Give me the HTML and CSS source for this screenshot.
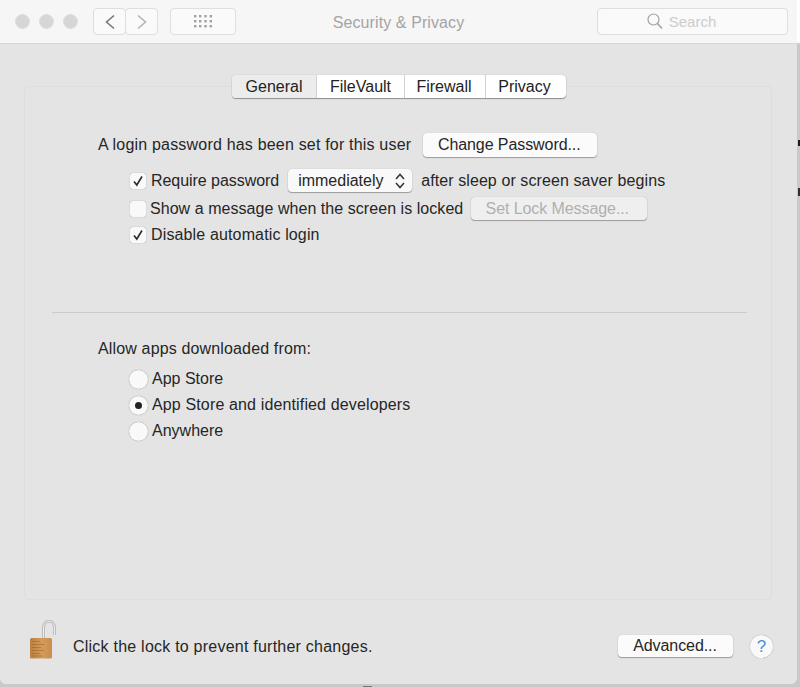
FILE: index.html
```html
<!DOCTYPE html>
<html lang="en">
<head>
<meta charset="utf-8">
<title>Security &amp; Privacy</title>
<link rel="stylesheet" href="styles.css">
</head>
<body>
<div class="window">
  <header class="titlebar">
    <div class="lights"><span class="light"></span><span class="light"></span><span class="light"></span></div>
    <div class="nav">
      <span class="nav-btn"><svg width="12" height="16" viewBox="0 0 12 16"><path d="M10 1.500 L2.500 8 L10 14.500" fill="none" stroke="#777" stroke-width="1.600"/></svg></span>
      <span class="nav-btn"><svg width="12" height="16" viewBox="0 0 12 16"><path d="M2 1.500 L9.500 8 L2 14.500" fill="none" stroke="#b4b4b4" stroke-width="1.600"/></svg></span>
    </div>
    <span class="grid-btn"><svg width="18" height="14" viewBox="0 0 18 14" fill="#a0a0a0"><rect x="0" y="0" width="2.400" height="2.400"/><rect x="5" y="0" width="2.400" height="2.400"/><rect x="10.300" y="0" width="2.400" height="2.400"/><rect x="15.600" y="0" width="2.400" height="2.400"/><rect x="0" y="5" width="2.400" height="2.400"/><rect x="5" y="5" width="2.400" height="2.400"/><rect x="10.300" y="5" width="2.400" height="2.400"/><rect x="15.600" y="5" width="2.400" height="2.400"/><rect x="0" y="10" width="2.400" height="2.400"/><rect x="5" y="10" width="2.400" height="2.400"/><rect x="10.300" y="10" width="2.400" height="2.400"/><rect x="15.600" y="10" width="2.400" height="2.400"/></svg></span>
    <h1 class="title">Security &amp; Privacy</h1>
    <div class="search"><svg width="16" height="17" viewBox="0 0 16 17"><circle cx="6.500" cy="6.500" r="5.500" fill="none" stroke="#a0a0a0" stroke-width="1.200"/><path d="M10.500 10.500 L15 15.500" stroke="#a0a0a0" stroke-width="1.500"/></svg><span>Search</span></div>
  </header>

  <main class="content">
    <nav class="tabs">
      <span class="tab tab-active">General</span><span class="tab tab-vault">FileVault</span><span class="tab tab-wall">Firewall</span><span class="tab tab-priv">Privacy</span>
    </nav>
    <section class="panel">
      <div class="row-login">
        <span class="wide">A login password has been set for this user</span>
        <button class="btn btn-change">Change Password...</button>
      </div>
      <div class="options">
        <div class="opt opt-first">
          <span class="check"><svg width="12" height="12" viewBox="0 0 12 12"><path d="M2 6.500 L4.800 10 L10 1.500" fill="none" stroke="#2a2a2a" stroke-width="1.600"/></svg></span>
          <span class="require">Require password</span>
          <span class="select">immediately<svg width="12" height="18" viewBox="0 0 12 18"><path d="M2 7 L6 2.500 L10 7 M2 11 L6 15.500 L10 11" fill="none" stroke="#333" stroke-width="1.500"/></svg></span>
          <span class="after">after sleep or screen saver begins</span>
        </div>
        <div class="opt opt-second">
          <span class="check"></span>
          <span class="show-text">Show a message when the screen is locked</span>
          <button class="btn btn-lock" disabled>Set Lock Message...</button>
        </div>
        <div class="opt opt-third">
          <span class="check"><svg width="12" height="12" viewBox="0 0 12 12"><path d="M2 6.500 L4.800 10 L10 1.500" fill="none" stroke="#2a2a2a" stroke-width="1.600"/></svg></span>
          <span class="mid">Disable automatic login</span>
        </div>
      </div>
      <hr class="divider">
      <p class="allow">Allow apps downloaded from:</p>
      <div class="radios">
        <div class="radio-row"><span class="radio"></span><span>App Store</span></div>
        <div class="radio-row"><span class="radio radio-on"></span><span class="mid">App Store and identified developers</span></div>
        <div class="radio-row"><span class="radio"></span><span>Anywhere</span></div>
      </div>
    </section>
    <footer class="footer">
      <svg class="lock" width="29" height="40" viewBox="0 0 29 40">
        <defs>
          <linearGradient id="brass" x1="0" y1="0" x2="1" y2="0">
            <stop offset="0" stop-color="#bb803f"/><stop offset=".55" stop-color="#d39c5c"/><stop offset="1" stop-color="#c88d4b"/>
          </linearGradient>
        </defs>
        <path d="M14.500 19 V8 C14.500 -1 25.500 -1 25.500 8 V15" fill="none" stroke="#bcbcbc" stroke-width="3"/>
        <path d="M14.500 19 V8 C14.500 -1 25.500 -1 25.500 8 V15" fill="none" stroke="#ececec" stroke-width="1"/>
        <rect x="1" y="18" width="22" height="20.500" rx="1.500" fill="url(#brass)"/>
        <path d="M3 21.500h8M3 24.500h12M3 27.500h9M3 30.500h12M3 33.500h8M3 36h10" stroke="#8f5b24" stroke-width="1" opacity=".45"/>
      </svg>
      <span class="lock-text">Click the lock to prevent further changes.</span>
      <button class="btn btn-advanced">Advanced...</button>
      <span class="help">?</span>
    </footer>
  </main>
</div>
<span class="edge-mark edge-mark-top"></span>
<span class="edge-mark edge-mark-low"></span>
<span class="dock-mark"></span>
</body>
</html>
```
FILE: styles.css
```css
* { box-sizing: border-box; }
html, body { margin: 0; padding: 0; }
body {
  width: 800px;
  height: 687px;
  overflow: hidden;
  position: relative;
  background: linear-gradient(#fff 0, #fff 42px, #c9c9c9 44px);
  font-family: "Liberation Sans", Arial, sans-serif;
  font-size: 16px;
  color: #262626;
}
.wide { letter-spacing: .19px; }
.mid { letter-spacing: .14px; }
.window {
  width: 797px;
  height: 684px;
  background: #e4e4e4;
  border-radius: 0 0 6px 6px;
  display: flex;
  flex-direction: column;
}
.titlebar {
  height: 44px;
  flex: none;
  background: #f6f6f6;
  border-bottom: 1px solid #d6d6d6;
  display: flex;
  align-items: center;
  position: relative;
  padding-left: 15px;
}
.lights { display: flex; gap: 9px; }
.light {
  width: 15px; height: 15px; border-radius: 50%;
  background: #d6d6d6; border: 1px solid #dedede;
}
.nav { display: flex; margin-left: 15px; }
.nav-btn {
  width: 33px; height: 27px;
  border: 1px solid #dedede; border-radius: 4px; background: #fafafa;
  display: flex; align-items: center; justify-content: center;
}
.nav-btn + .nav-btn { margin-left: -1px; }
.grid-btn {
  width: 66px; height: 27px; margin-left: 12px;
  border: 1px solid #dedede; border-radius: 4px; background: #fafafa;
  display: flex; align-items: center; justify-content: center;
}
.title {
  position: absolute; left: 0; width: 797px; margin: 2px 0 0;
  text-align: center; font-size: 16px; font-weight: 400; color: #a4a4a4;
  letter-spacing: .1px;
}
.search {
  margin-left: auto; margin-right: 9px;
  width: 191px; height: 27px; padding-right: 22px;
  border: 1px solid #dedede; border-radius: 4px; background: #fafafa;
  display: flex; align-items: center; justify-content: center; gap: 6px;
  color: #cccccc; font-size: 15px;
}
.content {
  flex: 1;
  display: flex; flex-direction: column;
  padding: 31px 25px 0 24px;
}
.tabs {
  display: flex; align-self: flex-start;
  margin-left: 208px; margin-bottom: -12px;
  position: relative; z-index: 1;
  background: #fff; border-radius: 4px;
  box-shadow: 0 1px 1px rgba(0,0,0,.35), 0 0 1px rgba(0,0,0,.3);
}
.tab {
  height: 23px; line-height: 23px; text-align: center;
  border-left: 1px solid #d2d2d2; color: #222;
}
.tab:first-child { border-left: 0; }
.tab-active { background: #ececec; border-radius: 4px 0 0 4px; width: 84px; }
.tab-vault { width: 88px; }
.tab-wall { width: 81px; padding-right: 2px; }
.tab-priv { width: 81px; padding-right: 3px; }
.panel {
  height: 514px;
  background: #e4e4e4;
  border: 1px solid #dedede;
  border-radius: 4px;
  padding: 46px 24px 0 27px;
}
.row-login { display: flex; align-items: center; padding-left: 46px; height: 24px; gap: 12px; }
.btn {
  font: inherit; color: #262626; background: #fbfbfb; border: 0; padding: 0;
  border-radius: 4px; box-shadow: 0 1px 1px rgba(0,0,0,.3), 0 0 1px rgba(0,0,0,.25);
  letter-spacing: -.08px;
}
.btn-change { width: 174px; height: 24px; padding-right: 2px; }
.options { padding-left: 78px; margin-top: 12px; }
.opt { display: flex; align-items: center; height: 23px; }
.opt-second { margin-top: 5px; }
.opt-third { margin-top: 3px; }
.check {
  width: 16px; height: 16px; flex: none;
  background: #f9f9f9; border-radius: 3px;
  box-shadow: 0 0 1px rgba(0,0,0,.45);
  display: flex; align-items: center; justify-content: center;
}
.require { margin-left: 5px; letter-spacing: -.05px; }
.select {
  width: 124px; height: 23px; padding: 0 6px 0 10px; margin-left: 9px;
  background: #f9f9f9; border-radius: 4px;
  box-shadow: 0 1px 1px rgba(0,0,0,.3), 0 0 1px rgba(0,0,0,.25);
  display: flex; align-items: center; justify-content: space-between;
}
.after { margin-left: 9px; letter-spacing: .09px; }
.show-text { margin-left: 4px; letter-spacing: .05px; }
.opt-third .mid { margin-left: 5px; }
.btn-lock { width: 176px; height: 23px; margin-left: 8px; padding-right: 4px; color: #b0b0b0; background: #efefef; }
.divider { border: 0; border-top: 1px solid #cbcbcb; margin: 66px 0 0; height: 0; }
.allow { margin: 26px 0 0; padding-left: 46px; line-height: 20px; letter-spacing: .15px; }
.radios { padding-left: 77px; margin-top: 7px; }
.radio-row { display: flex; align-items: center; gap: 4px; height: 26px; }
.radio {
  width: 19px; height: 19px; border-radius: 50%; flex: none;
  background: #f9f9f9; box-shadow: 0 0 1px rgba(0,0,0,.5);
  display: flex; align-items: center; justify-content: center;
}
.radio-on::after { content: ""; width: 7px; height: 7px; border-radius: 50%; background: #222; }
.footer { flex: 1; display: flex; align-items: center; padding: 10px 0 0 5px; }
.lock { flex: none; margin-top: -14px; }
.lock-text { margin-left: 15px; letter-spacing: .23px; }
.btn-advanced { width: 115px; height: 22px; margin: -2px 0 0 auto; padding-right: 1px; }
.help {
  width: 23px; height: 23px; border-radius: 50%; margin: -2px -1px 0 17px;
  background: #f9f9f9; box-shadow: 0 0 1px rgba(0,0,0,.4);
  color: #4a8fd6; text-align: center; line-height: 23px; font-size: 17px;
}
.edge-mark { position: absolute; right: 0; width: 2px; background: #1c1c1c; }
.edge-mark-top { top: 140px; height: 6px; }
.edge-mark-low { top: 188px; height: 8px; background: #3a2f1c; }
.dock-mark { position: absolute; left: 363px; bottom: 0; width: 9px; height: 1px; background: #777; }
```
